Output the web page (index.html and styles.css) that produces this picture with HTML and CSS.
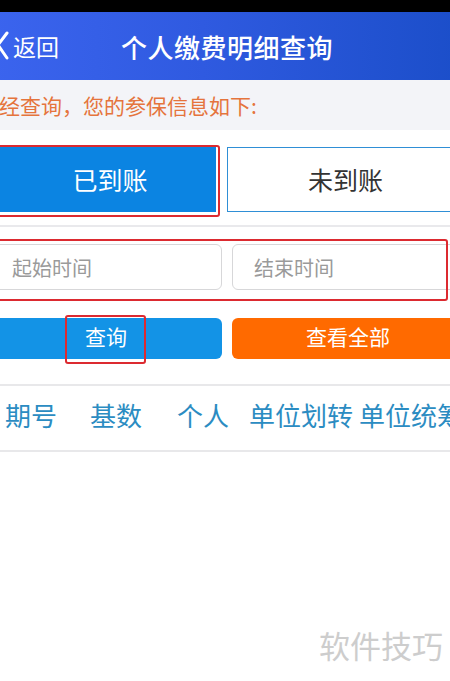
FILE: index.html
```html
<!DOCTYPE html>
<html lang="zh-CN">
<head>
<meta charset="utf-8">
<title>个人缴费明细查询</title>
<link rel="stylesheet" href="styles.css">
</head>
<body>
<div class="page">
  <div class="status"></div>
  <header class="header">
    <div class="back">
      <svg class="chev" width="14" height="30" viewBox="0 0 14 30"><polyline points="11,2 2,14 11,27" fill="none" stroke="#fff" stroke-width="3" stroke-linecap="round" stroke-linejoin="round"/></svg>
      <span>返回</span>
    </div>
    <h1 class="title">个人缴费明细查询</h1>
    <div></div>
  </header>
  <div class="info">经查询，您的参保信息如下:</div>
  <div class="tabs">
    <div class="tab active">已到账</div>
    <div class="tab">未到账</div>
  </div>
  <div class="divider"></div>
  <div class="row inputs">
    <div class="field">起始时间</div>
    <div class="field">结束时间</div>
  </div>
  <div class="row buttons">
    <div class="btn blue">查询</div>
    <div class="btn orange">查看全部</div>
  </div>
  <div class="cols">
    <span class="c1">期号</span>
    <span class="c2">基数</span>
    <span class="c3">个人</span>
    <span class="c4">单位划转</span>
    <span class="c5">单位统筹</span>
  </div>
  <div class="mark mark-tab"></div>
  <div class="mark mark-inputs"></div>
  <div class="mark mark-btn"></div>
  <div class="watermark">软件技巧</div>
</div>
</body>
</html>
```
FILE: styles.css
```css
html, body {
  margin: 0;
  padding: 0;
  width: 450px;
  height: 681px;
  overflow: hidden;
  background: #fff;
}
.page {
  position: relative;
  margin-left: -10px;
  width: 474px;
  height: 681px;
  font-family: "Noto Sans CJK SC", "Noto Sans", sans-serif;
}
.status {
  height: 12px;
  background: #000;
}
.header {
  height: 68px;
  background: linear-gradient(90deg, #3b64ee 0%, #2f5ae0 45%, #1b4ec9 100%);
  display: grid;
  grid-template-columns: 1fr auto 1fr;
  align-items: center;
  color: #fff;
}
.back {
  display: flex;
  align-items: center;
  padding-left: 6px;
  font-size: 23px;
  gap: 3px;
}
.chev { display: block; }
.title {
  margin: 0;
  font-size: 26px;
  font-weight: 500;
  letter-spacing: 0.5px;
}
.info {
  height: 50px;
  background: #f3f4f8;
  color: #e5743d;
  font-size: 21px;
  line-height: 50px;
  padding-left: 9px;
}
.tabs {
  margin-top: 17px;
  display: flex;
  gap: 11px;
  height: 65px;
}
.tab {
  display: flex;
  align-items: center;
  justify-content: center;
  font-size: 25px;
  box-sizing: border-box;
  padding-bottom: 2px;
}
.tab.active {
  width: 226px;
  background: #0b84e2;
  color: #fff;
  padding-left: 14px;
}
.tab:not(.active) {
  flex: 1;
  border: 1px solid #2f8fd6;
  color: #333;
}
.divider {
  margin-top: 13px;
  height: 2px;
  background: #e9e9ec;
}
.row {
  display: flex;
  gap: 10px;
}
.inputs {
  margin-top: 17px;
  height: 46px;
}
.field {
  flex: 1;
  border: 1px solid #d7d7d9;
  border-radius: 6px;
  box-sizing: border-box;
  padding-left: 21px;
  display: flex;
  align-items: center;
  font-size: 20px;
  color: #9a9a9a;
}
.buttons {
  margin-top: 28px;
  height: 41px;
}
.btn {
  flex: 1;
  border-radius: 6px;
  display: flex;
  align-items: center;
  justify-content: center;
  color: #fff;
  font-size: 21px;
  padding-bottom: 5px;
  box-sizing: border-box;
}
.btn.blue { background: #1393e6; }
.btn.orange { background: #ff6a00; }
.cols {
  margin-top: 25px;
  height: 64px;
  box-sizing: content-box;
  border-top: 2px solid #e8e8ea;
  border-bottom: 2px solid #e8e8ea;
  display: flex;
  align-items: center;
  padding-left: 15px;
  color: #2b8cc2;
  font-size: 26px;
  white-space: nowrap;
  overflow: hidden;
}
.cols span { display: block; flex: none; margin-bottom: 7px; }
.c1 { width: 85px; }
.c2 { width: 87px; }
.c3 { width: 72px; }
.c4 { width: 110px; }
.mark {
  position: absolute;
  border: 2px solid #dc2a30;
  border-radius: 3px;
  box-sizing: border-box;
}
.mark-tab { left: 2px; top: 145px; width: 228px; height: 72px; }
.mark-inputs { left: 2px; top: 239px; width: 456px; height: 62px; }
.mark-btn { left: 75px; top: 315px; width: 81px; height: 49px; }
.watermark {
  position: absolute;
  left: 329px;
  top: 622px;
  font-size: 31px;
  color: #cdcdcd;
  letter-spacing: 0;
}
```
